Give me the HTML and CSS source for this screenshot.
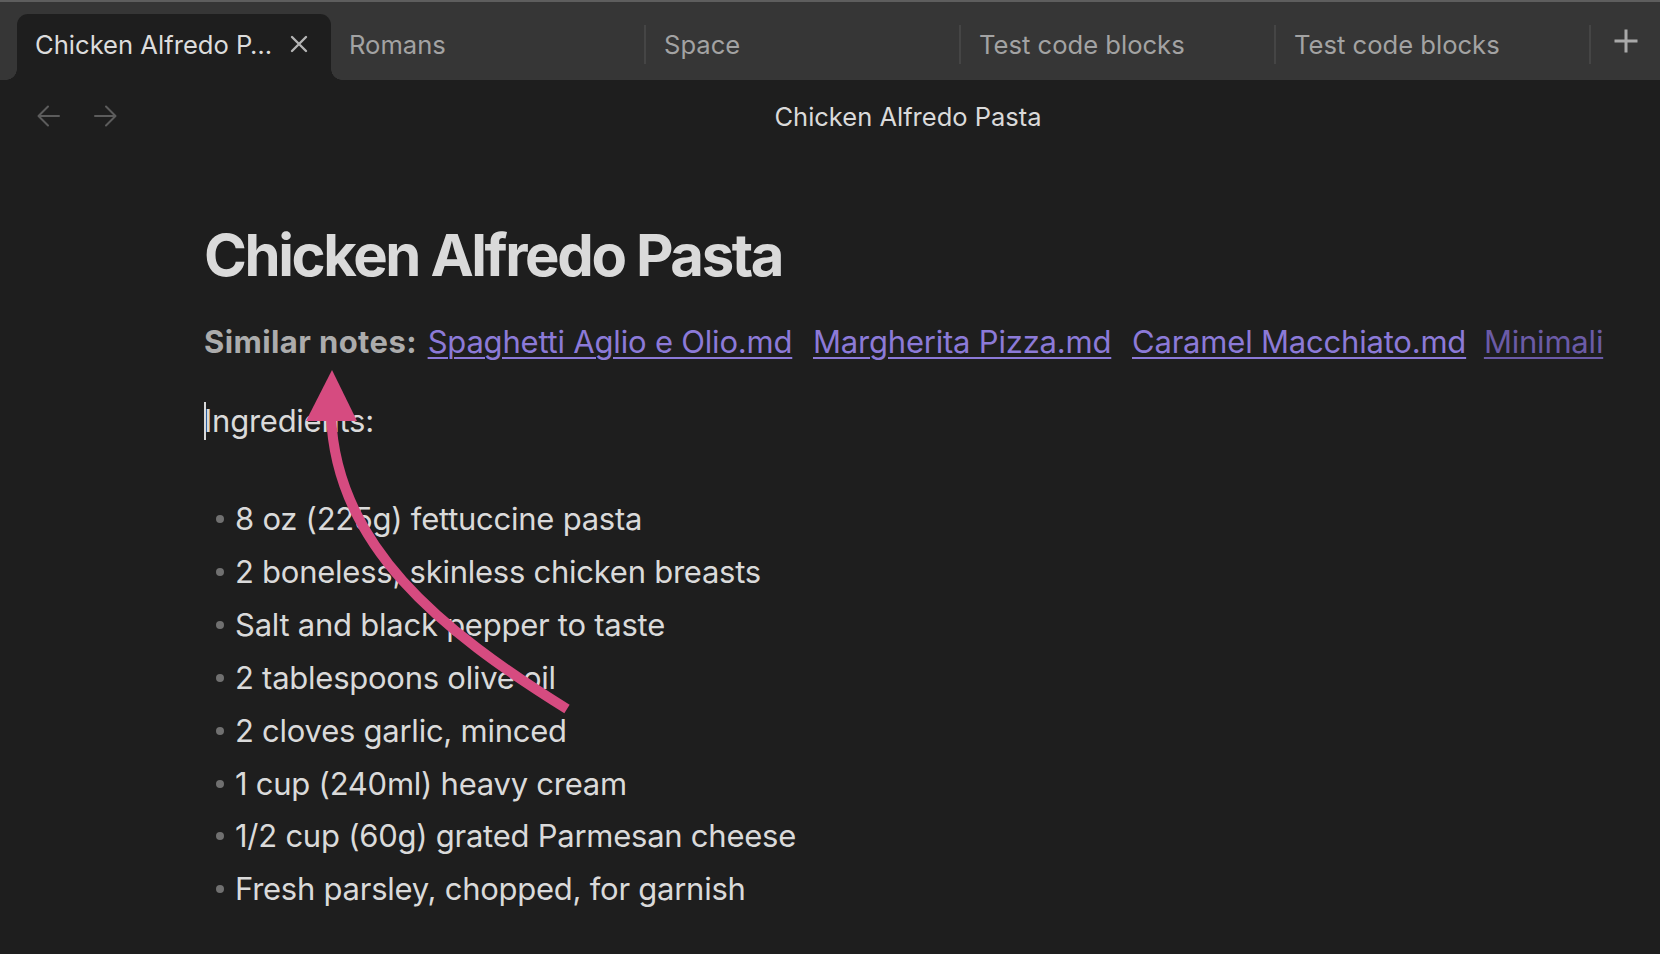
FILE: index.html
```html
<!DOCTYPE html>
<html lang="en">
<head>
<meta charset="utf-8">
<title>Chicken Alfredo Pasta</title>
<link rel="stylesheet" href="styles.css">
</head>
<body>
<div class="app">
  <div class="tabbar">
    <div class="tab active">
      <span class="tab-title">Chicken Alfredo P…</span>
      <svg class="tab-close" width="18" height="18" viewBox="0 0 18 18"><path d="M2 2 L16 16 M16 2 L2 16" stroke="#b4b4b4" stroke-width="2.4" stroke-linecap="round" fill="none"/></svg>
    </div>
    <div class="tab"><span class="tab-title">Romans</span></div>
    <div class="tab-sep"></div>
    <div class="tab"><span class="tab-title">Space</span></div>
    <div class="tab-sep"></div>
    <div class="tab"><span class="tab-title">Test code blocks</span></div>
    <div class="tab-sep"></div>
    <div class="tab"><span class="tab-title">Test code blocks</span></div>
    <div class="tab-sep"></div>
    <div class="tab-new">
      <svg width="26" height="26" viewBox="0 0 26 26"><path d="M13 1.5 V24.5 M1.5 13 H24.5" stroke="#a9a9a9" stroke-width="3" fill="none"/></svg>
    </div>
  </div>

  <div class="viewheader">
    <div class="nav">
      <svg width="24" height="24" viewBox="0 0 24 24"><path d="M22 12 H2 M11 2.5 L1.5 12 L11 21.5" stroke="#5c5c5c" stroke-width="2" fill="none" stroke-linecap="round" stroke-linejoin="round"/></svg>
      <svg width="24" height="24" viewBox="0 0 24 24"><path d="M2 12 H22 M13 2.5 L22.5 12 L13 21.5" stroke="#5c5c5c" stroke-width="2" fill="none" stroke-linecap="round" stroke-linejoin="round"/></svg>
    </div>
    <div class="view-title">Chicken Alfredo Pasta</div>
  </div>

  <div class="content">
    <h1 class="note-title">Chicken Alfredo Pasta</h1>
    <p class="similar"><strong class="similar-label">Similar notes:</strong> <a class="link link-first" href="#">Spaghetti Aglio e Olio.md</a> <a class="link" href="#">Margherita Pizza.md</a> <a class="link" href="#">Caramel Macchiato.md</a> <a class="link link-fade" href="#">Minimali</a></p>
    <p class="para"><span class="cursor"></span>Ingredients:</p>
    <p class="para empty">&nbsp;</p>
    <ul class="list">
      <li>8 oz (225g) fettuccine pasta</li>
      <li>2 boneless, skinless chicken breasts</li>
      <li>Salt and black pepper to taste</li>
      <li>2 tablespoons olive oil</li>
      <li>2 cloves garlic, minced</li>
      <li>1 cup (240ml) heavy cream</li>
      <li>1/2 cup (60g) grated Parmesan cheese</li>
      <li>Fresh parsley, chopped, for garnish</li>
    </ul>
  </div>

  <svg class="annotation" width="1660" height="954" viewBox="0 0 1660 954">
    <path d="M567 709 C440 630 335 545 331 414" stroke="#d64b80" stroke-width="10" fill="none"/>
    <polygon points="332,370 306,421 357,421" fill="#d64b80"/>
  </svg>
</div>
</body>
</html>
```

FILE: styles.css
```css
* { box-sizing: border-box; }

html, body {
  margin: 0;
  padding: 0;
  background: #1e1e1e;
}

body {
  font-family: "Inter", "Noto Sans", sans-serif;
  color: #dadada;
  width: 1660px;
  height: 954px;
  overflow: hidden;
}

.app {
  position: relative;
  width: 1660px;
  height: 954px;
}

/* ---------- tab bar ---------- */
.tabbar {
  height: 80px;
  background: #363636;
  border-top: 2px solid #5e5e5e;
  display: flex;
  align-items: flex-end;
  padding-left: 17px;
}

.tab {
  position: relative;
  width: 313px;
  height: 66px;
  display: flex;
  align-items: center;
  padding-left: 18px;
  padding-bottom: 6px;
  font-size: 25.6px;
  color: #a3a3a3;
  white-space: nowrap;
}

.tab.active {
  width: 314px;
  background: #1e1e1e;
  border-radius: 11px 11px 0 0;
  color: #dcdcdc;
  padding-left: 18px;
}

.tab.active::before,
.tab.active::after {
  content: "";
  position: absolute;
  bottom: 0;
  width: 11px;
  height: 11px;
}

.tab.active::before {
  left: -11px;
  background: radial-gradient(circle at 0 0, transparent 10.5px, #1e1e1e 11px);
}

.tab.active::after {
  right: -11px;
  background: radial-gradient(circle at 100% 0, transparent 10.5px, #1e1e1e 11px);
}

.tab-close {
  margin-left: 18px;
  flex: none;
}

.tab-sep {
  width: 2px;
  height: 39px;
  background: #454545;
  align-self: flex-start;
  margin-top: 23px;
  flex: none;
}

.tab-new {
  align-self: center;
  margin-left: 22px;
  display: flex;
}

/* ---------- view header ---------- */
.viewheader {
  height: 72px;
  display: flex;
  align-items: center;
}

.nav {
  width: 156px;
  display: flex;
  align-items: center;
  gap: 32px;
  padding-left: 37px;
}

.nav svg { display: block; }

.view-title {
  flex: 1;
  text-align: center;
  font-size: 25.5px;
  color: #dadada;
}

/* ---------- content ---------- */
.content {
  padding-left: 204px;
  width: 1640px;
}

.note-title {
  margin: 68px 0 0 0;
  font-size: 58px;
  line-height: 70px;
  font-weight: 700;
  letter-spacing: -2.4px;
  color: #dadada;
}

.similar {
  margin: 28px 0 0 0;
  font-size: 31px;
  line-height: 48px;
  white-space: nowrap;
  word-spacing: 6px;
}

.similar-label {
  color: #acacac;
  font-weight: 700;
  word-spacing: 0;
  letter-spacing: 0.4px;
}

.link {
  color: #8c7ad8;
  text-decoration: underline;
  text-decoration-thickness: 2px;
  text-underline-offset: 4px;
  word-spacing: 0;
  letter-spacing: -0.2px;
  margin-left: 6px;
}

.link-first {
  margin-left: -4px;
}

.link-fade {
  color: #6b5ba6;
  margin-left: 3px;
}

.para {
  margin: 31px 0 0 0;
  font-size: 31px;
  line-height: 48px;
  letter-spacing: -0.25px;
  position: relative;
}

.para.empty {
  margin-top: 0;
}

.cursor {
  position: absolute;
  left: 0;
  top: 5px;
  width: 2px;
  height: 38px;
  background: #d8d8d8;
}

.list {
  list-style: none;
  margin: 0;
  padding: 0;
}

.list li {
  position: relative;
  font-size: 31px;
  line-height: 52.9px;
  letter-spacing: -0.25px;
  padding-left: 31px;
}

.list li::before {
  content: "";
  position: absolute;
  left: 12px;
  top: 22px;
  width: 8px;
  height: 8px;
  border-radius: 50%;
  background: #707070;
}

/* ---------- annotation overlay ---------- */
.annotation {
  position: absolute;
  left: 0;
  top: 0;
  pointer-events: none;
}
```
